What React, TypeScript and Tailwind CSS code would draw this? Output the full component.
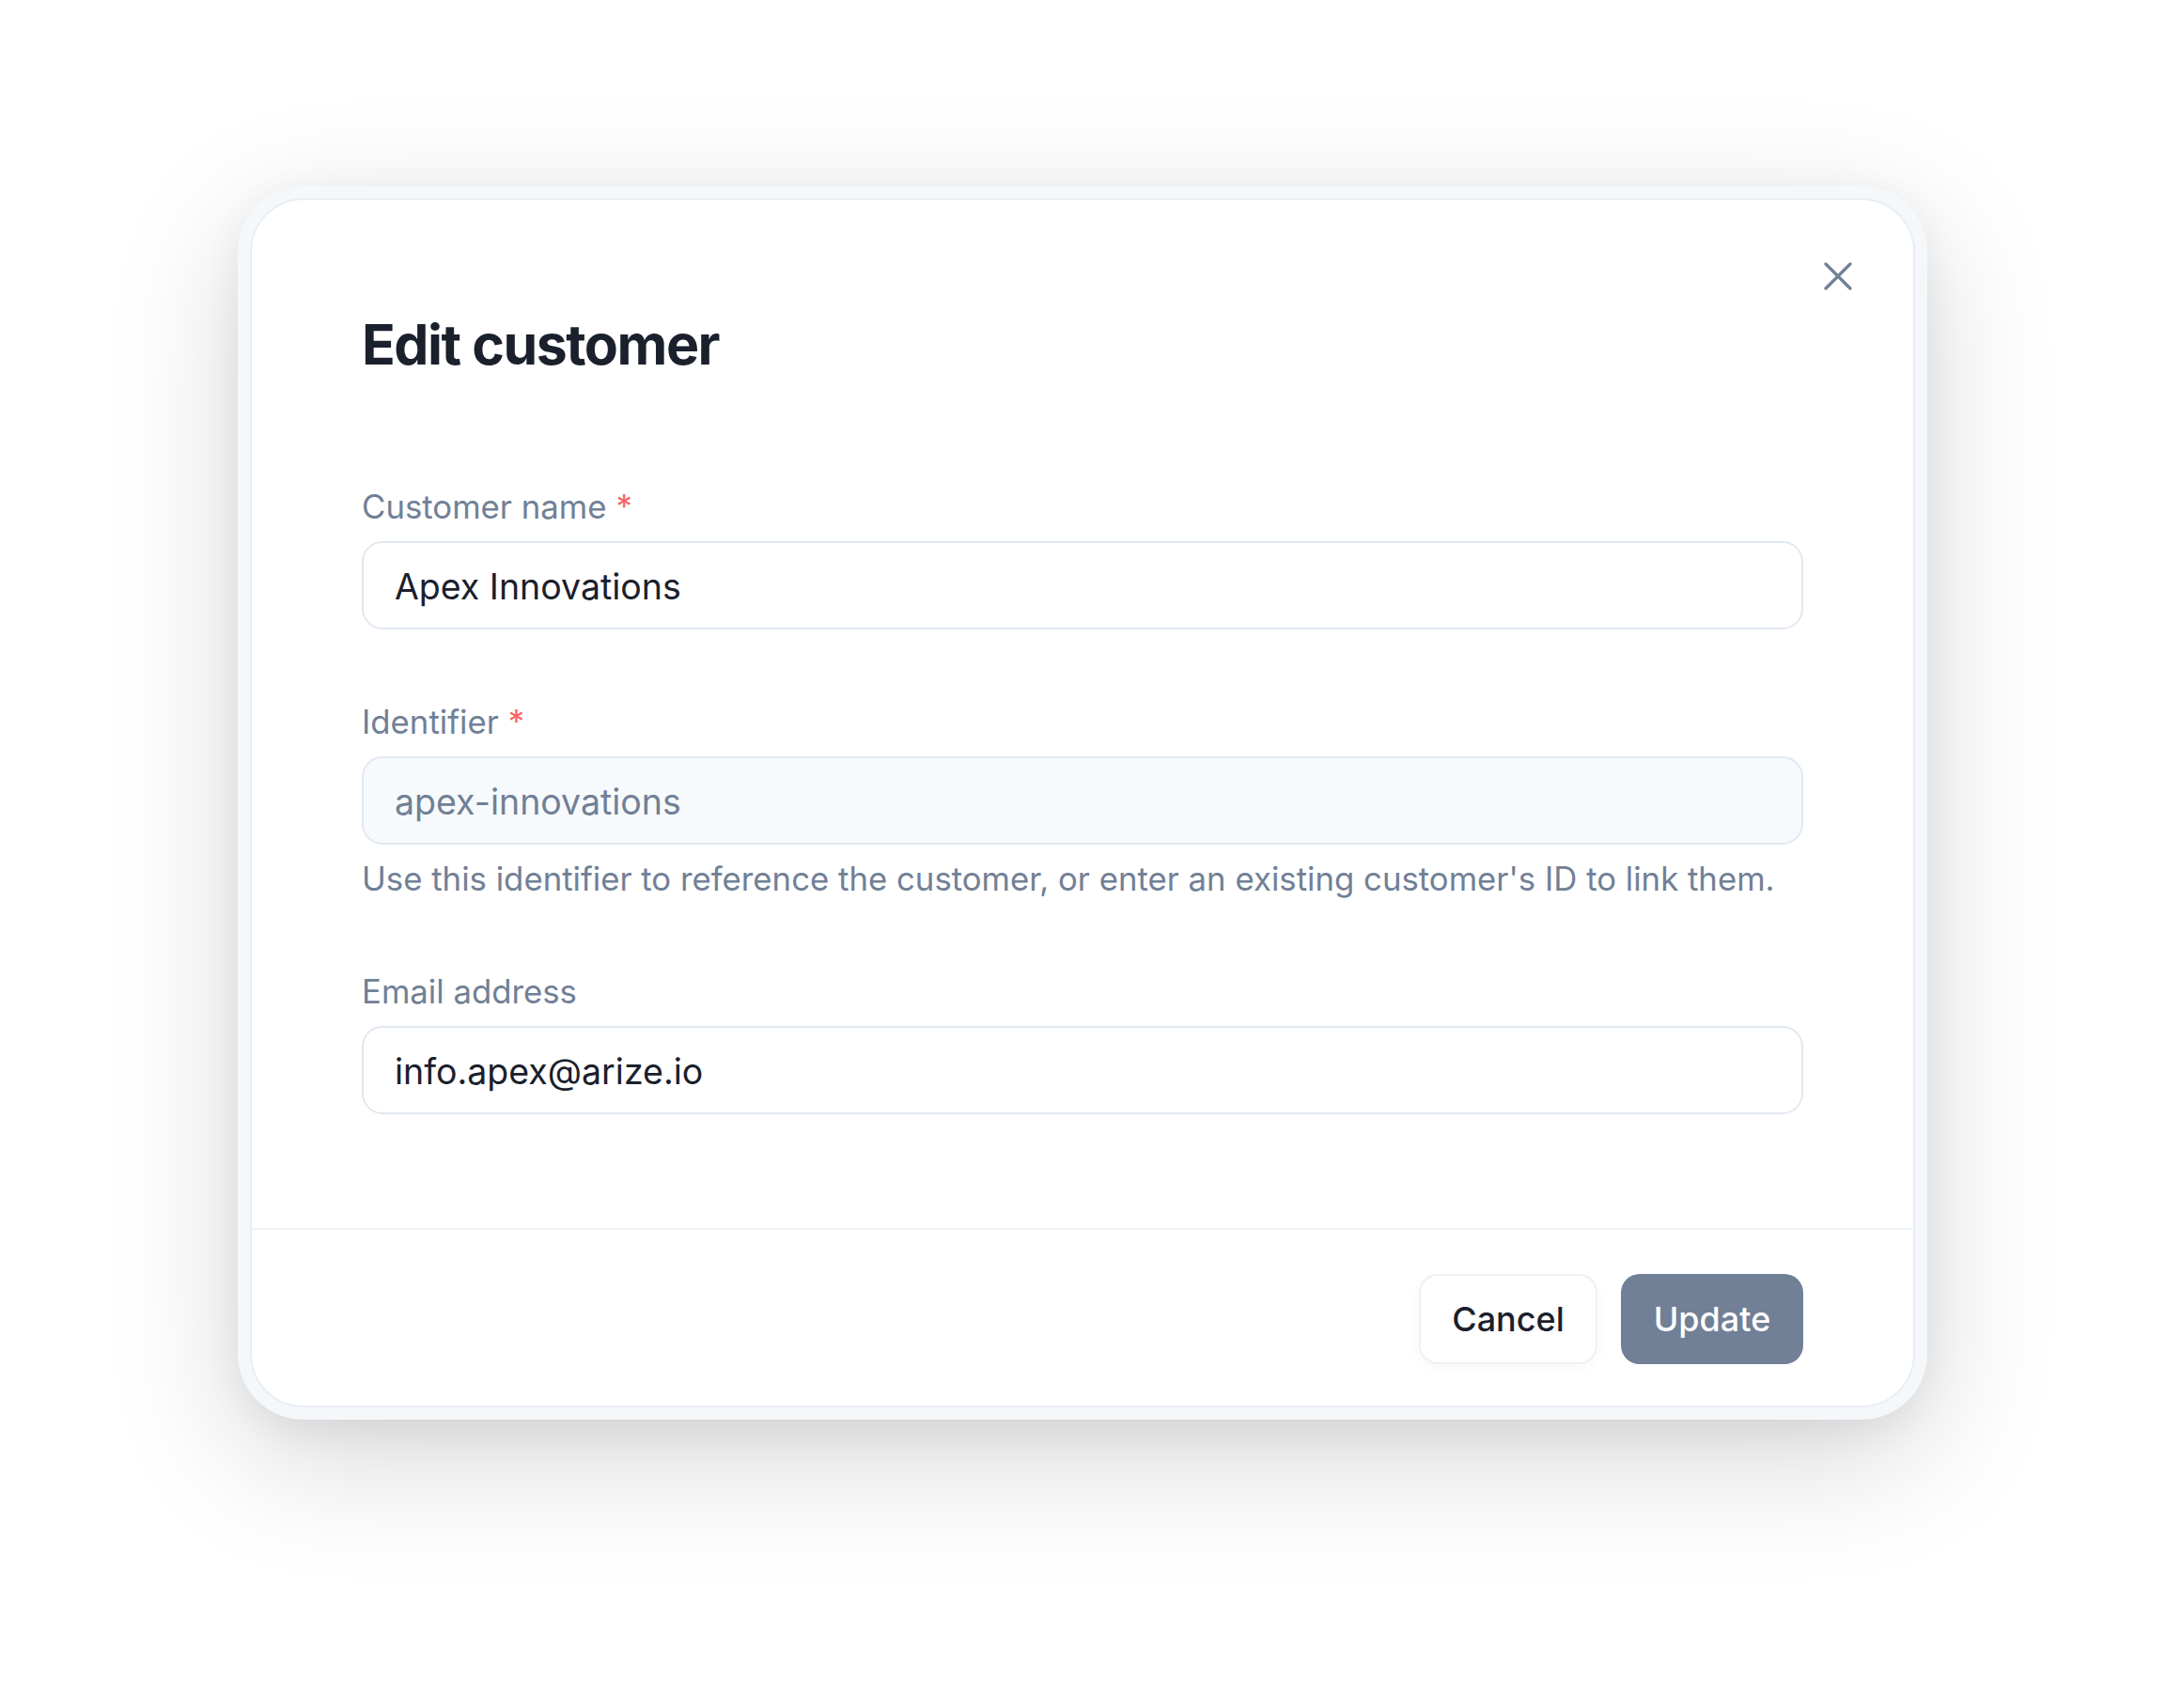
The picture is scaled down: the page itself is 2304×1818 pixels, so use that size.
import React from "react";

function CloseIcon() {
  return (
    <svg width="30" height="30" viewBox="0 0 30 30" fill="none">
      <path
        d="M2 2L28 28M28 2L2 28"
        stroke="#718096"
        strokeWidth="3.2"
        strokeLinecap="round"
      />
    </svg>
  );
}

function Label({ text, required }: { text: string; required?: boolean }) {
  return (
    <label className="block text-[34.75px] leading-[40px] text-[#718096] mb-[17px]">
      {text}
      {required && <span className="ml-[10px] text-[#f56565]">*</span>}
    </label>
  );
}

function EditCustomer() {
  const fields = [
    { label: "Customer name", value: "Apex Innovations", required: true },
    {
      label: "Identifier",
      value: "apex-innovations",
      required: true,
      muted: true,
      help: "Use this identifier to reference the customer, or enter an existing customer's ID to link them.",
    },
    { label: "Email address", value: "info.apex@arize.io" },
  ];

  return (
    <div className="h-[1818px] w-full overflow-hidden bg-white flex justify-center pt-[198px] font-['Inter','Liberation_Sans',sans-serif]">
      {/* outer frame */}
      <div className="w-[1798px] h-fit rounded-[70px] bg-[#f5f8fb] p-[13px] shadow-[0_40px_140px_rgba(0,0,0,0.16),0_12px_40px_rgba(0,0,0,0.06)]">
        <div className="relative rounded-[57px] border-2 border-[#e9eef4] bg-white">
          <button className="absolute right-[65px] top-[66px] p-0 leading-none">
            <CloseIcon />
          </button>

          <div className="px-[117px] pt-[118px] pb-[121px]">
            <h2 className="text-[59px] leading-[72px] font-bold tracking-tight text-[#1a202c] mb-[116px]">
              Edit customer
            </h2>

            <div className="flex flex-col gap-[78px]">
              {fields.map((f) => (
                <div key={f.label}>
                  <Label text={f.label} required={f.required} />
                  <input
                    readOnly
                    value={f.value}
                    className={
                      f.muted
                        ? "block w-full h-[94px] rounded-[22px] border-2 border-[#e2e8f0] bg-[#f7fafc] px-[33px] pt-[3px] text-[37.5px] text-[#718096] outline-none"
                        : "block w-full h-[94px] rounded-[22px] border-2 border-[#e2e8f0] bg-white px-[33px] pt-[3px] text-[37.5px] text-[#1a202c] outline-none"
                    }
                  />
                  {f.help && (
                    <p className="mt-[16px] mb-[2px] text-[34.75px] leading-[40px] text-[#718096]">
                      {f.help}
                    </p>
                  )}
                </div>
              ))}
            </div>
          </div>

          <div className="border-t-2 border-[#edf2f7] px-[117px] pt-[47px] pb-[44px] flex justify-end gap-[25px]">
            <button className="h-[96px] w-[190px] rounded-[20px] border-2 border-[#edf2f7] bg-white text-[36px] font-medium text-[#1a202c] shadow-[0_4px_14px_rgba(0,0,0,0.03)]">
              Cancel
            </button>
            <button className="h-[96px] w-[194px] rounded-[20px] bg-[#718096] text-[36px] font-medium text-white">
              Update
            </button>
          </div>
        </div>
      </div>
    </div>
  );
}

export default function App() {
  return <EditCustomer />;
}
